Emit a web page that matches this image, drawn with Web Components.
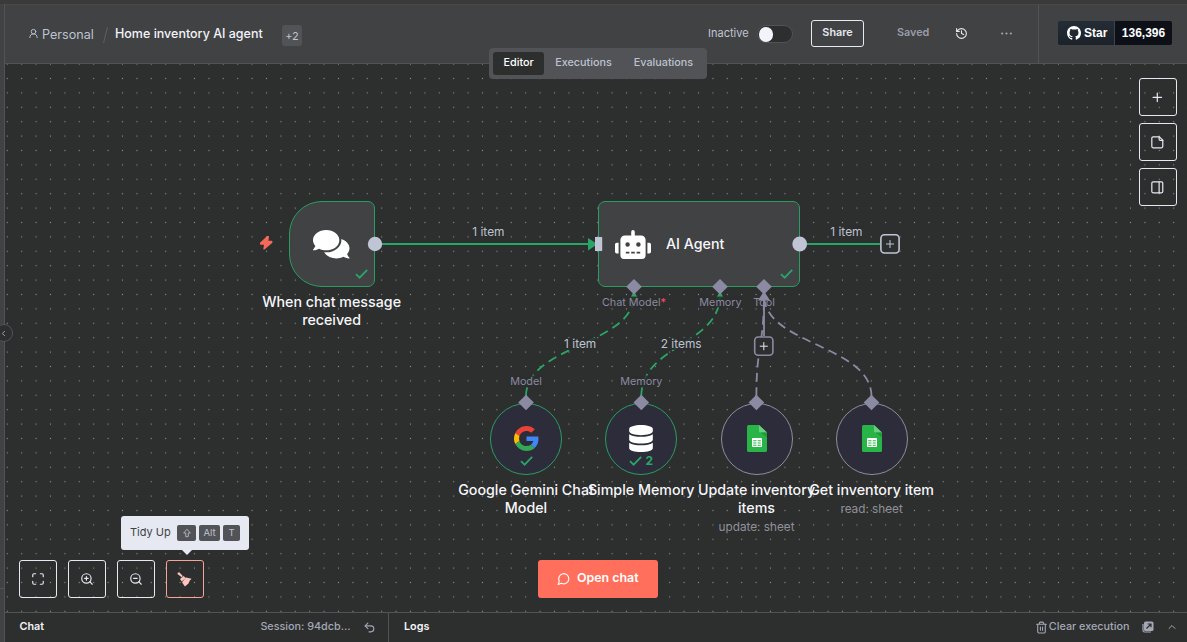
<!DOCTYPE html>
<html lang="en">
<head>
<meta charset="utf-8">
<title>Home inventory AI agent</title>
<style>
html,body{margin:0;height:100%;overflow:hidden;background:#2d2e2e}
body{font-family:Inter,"Liberation Sans",sans-serif;color:#c0c5d2;font-size:12px}
</style>
</head>
<body>
<wf-app></wf-app>
<script>
const define = (name, css, html) => customElements.define(name, class extends HTMLElement {
  constructor() {
    super();
    const attr = k => this.getAttribute(k) || '';
    const body = typeof html === 'function' ? html(attr, this) : html;
    this.attachShadow({ mode: 'open' }).innerHTML = `<style>*{box-sizing:border-box}${css}</style>${body}`;
  }
});

const line = d => `<svg viewBox="0 0 24 24" fill="none" stroke="currentColor" stroke-width="2" stroke-linecap="round" stroke-linejoin="round">${d}</svg>`;
const ICONS = {
  user: line('<circle cx="12" cy="8" r="5"/><path d="M20 21a8 8 0 0 0-16 0"/>'),
  history: line('<path d="M3 12a9 9 0 1 0 9-9 9.75 9.75 0 0 0-6.74 2.74L3 8"/><path d="M3 3v5h5"/><path d="M12 7v5l4 2"/>'),
  dots: line('<circle cx="12" cy="12" r="1"/><circle cx="20" cy="12" r="1"/><circle cx="4" cy="12" r="1"/>'),
  plus: line('<path d="M5 12h14M12 5v14"/>'),
  note: line('<path d="M15.5 3H5a2 2 0 0 0-2 2v14a2 2 0 0 0 2 2h14a2 2 0 0 0 2-2V8.500Z"/><path d="M15 3v4a2 2 0 0 0 2 2h4"/>'),
  panel: line('<rect x="3" y="3" width="18" height="18" rx="2"/><path d="M15 3v18"/>'),
  fit: line('<path d="M8 3H5a2 2 0 0 0-2 2v3M21 8V5a2 2 0 0 0-2-2h-3M3 16v3a2 2 0 0 0 2 2h3M16 21h3a2 2 0 0 0 2-2v-3"/>'),
  zoomin: line('<circle cx="11" cy="11" r="8"/><path d="m21 21-4.35-4.35M11 8v6M8 11h6"/>'),
  zoomout: line('<circle cx="11" cy="11" r="8"/><path d="m21 21-4.35-4.350M8 11h6"/>'),
  broom: '<svg viewBox="0 0 16 16" fill="currentColor"><path d="M.9.900 2.500.4 6.400 4.300 5.200 5.700.5 2.200ZM7.300 4.300 9.600 6.500 5.200 10.300 3.300 7.700ZM10 6 16 7.500 13.900 9.700 12.600 12.700 8.700 16 7.500 14.200 5.500 11.300Z"/></svg>',
  bubble: line('<path d="M7.900 20A9 9 0 1 0 4 16.100L2 22Z"/>'),
  trash: line('<path d="M3 6h18M19 6v14a2 2 0 0 1-2 2H7a2 2 0 0 1-2-2V6M8 6V4a2 2 0 0 1 2-2h4a2 2 0 0 1 2 2v2M10 11v6M14 11v6"/>'),
  up: line('<path d="m18 15-6-6-6 6"/>'),
  left: line('<path d="m15 18-6-6 6-6"/>'),
  undo: line('<path d="M9 14 4 9l5-5"/><path d="M4 9h10.500a5.500 5.500 0 0 1 0 11H11"/>'),
  popout: '<svg viewBox="0 0 12 12"><path d="M1 3v6.500A1.500 1.500 0 0 0 2.500 11H9" fill="none" stroke="currentColor" stroke-width="1.200"/><rect x="2" y=".5" width="9.500" height="9.500" rx="1.500" fill="currentColor"/><path d="M4.500 7.500 9 3M5.700 3H9v3.300" fill="none" stroke="#2d2e2e" stroke-width="1.200"/></svg>',
  shift: line('<path d="M9 20v-8H4l8-9 8 9h-5v8z"/>'),
  bolt: '<svg viewBox="0 0 37 41" fill="currentColor" stroke="currentColor" stroke-width="4" stroke-linejoin="round"><path d="M22 2 2 21V24H14L12 39 35 19V16H23L25 2Z"/></svg>',
  check: '<svg viewBox="0 0 13 10" fill="none" stroke="currentColor" stroke-width="1.800"><path d="M1 5.200 4.600 8.700 12.200.9"/></svg>',
  github: '<svg viewBox="0 0 16 16" fill="currentColor"><path d="M8 0C3.580 0 0 3.580 0 8c0 3.540 2.290 6.530 5.470 7.590.4.070.55-.17.55-.38 0-.19-.01-.82-.01-1.490-2.010.37-2.530-.49-2.690-.94-.09-.23-.48-.94-.82-1.130-.28-.15-.68-.52-.01-.53.63-.01 1.080.58 1.230.82.72 1.210 1.870.87 2.330.66.07-.52.28-.87.51-1.070-1.780-.2-3.640-.89-3.640-3.950 0-.87.31-1.590.82-2.150-.08-.2-.36-1.020.08-2.120 0 0 .67-.21 2.200.82.64-.18 1.320-.27 2-.27s1.360.09 2 .27c1.530-1.040 2.200-.82 2.200-.82.44 1.100.16 1.920.08 2.120.51.56.82 1.270.82 2.150 0 3.070-1.870 3.750-3.650 3.950.29.25.54.73.54 1.480 0 1.070-.01 1.930-.01 2.200 0 .21.15.46.55.38A8.010 8.010 0 0 0 16 8c0-4.420-3.580-8-8-8z"/></svg>',
  comments: '<svg viewBox="0 0 576 512" fill="currentColor"><path d="M416 192c0-88.400-93.100-160-208-160S0 103.600 0 192c0 34.300 14.100 65.900 38 92-13.400 30.200-35.500 54.200-35.800 54.500-2.200 2.300-2.800 5.700-1.500 8.700S4.800 352 8 352c36.600 0 66.900-12.300 88.700-25 32.200 15.700 70.300 25 111.300 25 114.900 0 208-71.600 208-160zm122 220c23.900-26 38-57.700 38-92 0-66.900-53.500-124.200-129.300-148.100.9 6.600 1.300 13.300 1.300 20.100 0 105.900-107.700 192-240 192-10.800 0-21.300-.8-31.700-1.900C207.800 439.600 281.800 480 368 480c41 0 79.100-9.200 111.300-25 21.800 12.700 52.100 25 88.700 25 3.200 0 6.100-1.900 7.300-4.800 1.300-2.900.7-6.300-1.500-8.700-.3-.3-22.400-24.200-35.800-54.500z"/></svg>',
  robot: '<svg viewBox="0 0 640 512" fill="currentColor"><path d="M32,224H64V416H32A32,32,0,0,1,0,384V256A32,32,0,0,1,32,224Zm512-48V448a64,64,0,0,1-64,64H160a64,64,0,0,1-64-64V176a80,80,0,0,1,80-80H288V32a32,32,0,0,1,64,0V96H464A80,80,0,0,1,544,176ZM264,256a40,40,0,1,0-40,40A40,40,0,0,0,264,256Zm-8,128H192v32h64Zm96,0H288v32h64ZM456,256a40,40,0,1,0-40,40A40,40,0,0,0,456,256Zm-8,128H384v32h64ZM640,256V384a32,32,0,0,1-32,32H576V224h32A32,32,0,0,1,640,256Z"/></svg>',
  database: '<svg viewBox="0 0 448 512" fill="currentColor"><path d="M448 73.143v45.714C448 159.143 347.667 192 224 192S0 159.143 0 118.857V73.143C0 32.857 100.333 0 224 0s224 32.857 224 73.143zM448 176v102.857C448 319.143 347.667 352 224 352S0 319.143 0 278.857V176c48.125 33.143 136.208 48.572 224 48.572S399.874 209.143 448 176zm0 160v102.857C448 479.143 347.667 512 224 512S0 479.143 0 438.857V336c48.125 33.143 136.208 48.572 224 48.572S399.874 369.143 448 336z"/></svg>',
  google: '<svg viewBox="0 0 48 48"><path fill="#ea4335" d="M24 9.500c3.540 0 6.710 1.220 9.210 3.600l6.850-6.850C35.900 2.380 30.470 0 24 0 14.620 0 6.510 5.380 2.560 13.220l7.980 6.190C12.430 13.720 17.740 9.500 24 9.500z"/><path fill="#4285f4" d="M46.980 24.550c0-1.570-.15-3.090-.38-4.550H24v9.020h12.940c-.58 2.960-2.260 5.480-4.780 7.180l7.730 6c4.510-4.180 7.090-10.360 7.090-17.650z"/><path fill="#fbbc05" d="M10.530 28.590c-.48-1.450-.76-2.990-.76-4.590s.27-3.140.76-4.590l-7.980-6.190C.92 16.460 0 20.120 0 24c0 3.880.92 7.540 2.560 10.780l7.970-6.190z"/><path fill="#34a853" d="M24 48c6.480 0 11.930-2.130 15.890-5.810l-7.730-6c-2.150 1.450-4.920 2.300-8.160 2.300-6.260 0-11.570-4.220-13.470-9.910l-7.980 6.190C6.510 42.620 14.620 48 24 48z"/></svg>',
  sheets: '<svg viewBox="0 0 20 27"><path d="M1.500 0H12l8 7.500V25.500A1.500 1.500 0 0 1 18.500 27h-17A1.500 1.500 0 0 1 0 25.500v-24A1.500 1.500 0 0 1 1.500 0Z" fill="#28b446"/><path d="M12 0 20 7.500H13.500A1.500 1.500 0 0 1 12 6Z" fill="#6ace7c"/><path d="m13.500 7.500 6.500 5V7.500Z" fill="#219b38"/><rect x="5" y="13" width="10" height="9" rx="1" fill="#fff"/><path d="M6.200 15.700h3.300M10.700 15.700h3.100M6.200 18h3.300M10.700 18h3.100M6.200 20.300h3.300M10.700 20.300h3.100" stroke="#28b446" stroke-width="1.100"/></svg>'
};
define('wf-icon', ':host{display:block;flex:none}svg{display:block;width:100%;height:100%;overflow:visible}', a => ICONS[a('name')]);

/* ---------- header ---------- */
define('wf-breadcrumb', `
:host{display:flex;align-items:center;height:100%}
wf-icon{width:11px;height:11px;margin:-1px 3px 0 -1px}
.home{font-size:12.600px;color:#bcc2d0;width:62px;white-space:nowrap}
.sep{width:1px;height:16px;background:#5d5e61;transform:rotate(14deg);margin:2px 0 0 1px}
.name{font-size:12.500px;font-weight:500;color:#f2f3f8;margin:-1px 0 0 9px;white-space:nowrap;width:167px}
.more{background:#525356;border-radius:3px;width:20px;height:21px;line-height:22px;text-align:center;font-size:11px;margin-top:3px}
`, `<wf-icon name="user"></wf-icon><span class="home">Personal</span><span class="sep"></span><span class="name">Home inventory AI agent</span><span class="more">+2</span>`);

define('wf-toggle', `
:host{display:flex;align-items:center;gap:8px;font-size:11px;margin-top:-2px}
.track{width:36px;height:18px;border-radius:9px;background:#2d2e2e;border:1px solid #525356;padding:1px;margin-top:2px}
.knob{width:14.500px;height:14.500px;border-radius:50%;background:#f2f4fb}
`, `<slot></slot><span class="track"><div class="knob"></div></span>`);

define('wf-github-star', `
:host{display:flex;height:24px;font:bold 12px "Liberation Sans",sans-serif;color:#fff;border-radius:2px;overflow:hidden;margin-top:-2px}
.l{display:flex;align-items:center;gap:3px;background:linear-gradient(#242c35,#1c2229);width:56px;padding-left:9px}
.r{background:#0d1117;flex:1;text-align:center;line-height:24px;border-left:1px solid #3d444d;width:58px}
wf-icon{width:14px;height:14px}
`, `<span class="l"><wf-icon name="github"></wf-icon>Star</span><span class="r">136,396</span>`);

define('wf-header', `
:host{display:flex;height:60px;background:#414244;border-bottom:1px solid #525356;border-top:1px solid #464749;padding-left:24px}
.right{margin-left:auto;display:flex;align-items:center;height:100%}
.share{width:53px;height:27px;border:1px solid #e6e9f2;border-radius:3px;font-size:10.800px;font-weight:600;color:#e6e9f2;text-align:center;line-height:23px;margin:-1px 33px 0 18.400px}
.saved{font-size:10.800px;font-weight:600;color:#9a9ca8;width:58px;margin-top:-4px}
.hist{width:13px;height:13px;color:#e6e9f2;margin:-1px 32px 0 0}
.more{width:13px;height:13px;color:#a4a6b2;margin-top:-1px}
.star{display:flex;align-items:center;height:100%;border-left:1px solid #525356;margin-left:25px;padding:0 15px 0 19px}
.star>*{width:114px}
`, `<wf-breadcrumb></wf-breadcrumb><div class="right"><wf-toggle>Inactive</wf-toggle><span class="share">Share</span><span class="saved">Saved</span><wf-icon class="hist" name="history"></wf-icon><wf-icon class="more" name="dots"></wf-icon><div class="star"><wf-github-star></wf-github-star></div></div>`);

define('wf-tabs', `
:host{display:flex;background:#525356;border-radius:4px;padding:4px;height:31px;width:218px;font-size:10.800px;font-weight:500;color:#bcc2d0}
span{line-height:21px;height:23px;padding:0 11px;border-radius:3px;white-space:nowrap}
.on{background:#2d2e2e;color:#fff;padding:0 10.500px;width:51.500px}
`, `<span class="on">Editor</span><span>Executions</span><span>Evaluations</span>`);

/* ---------- canvas ---------- */
define('wf-button', `
:host{display:flex;align-items:center;justify-content:center;width:38px;height:38px;border:1px solid #e6e9f2;border-radius:3px;color:#e6e9f2}
:host([active]){border-color:#f7a399;color:#fbc4be}
wf-icon{width:14px;height:14px}
:host([side]) wf-icon,:host([active]) wf-icon{width:14.600px;height:14.600px;margin-left:-1.400px}
`, a => `<wf-icon name="${a('icon')}"></wf-icon>`);

define('wf-tooltip', `
:host{display:flex;align-items:center;background:#e6e9f2;color:#414244;border-radius:3px;width:128px;height:34px;padding-left:9px;font-size:11px;gap:3px}
.t{width:44px;margin-top:-2px;white-space:nowrap}
kbd{background:#525356;color:#bcc2d0;font:9.600px/14px Inter,sans-serif;height:16px;padding-bottom:1px;border-radius:2px;display:flex;align-items:center;justify-content:center}
wf-icon{width:10px;height:10px}
i{position:absolute;left:60px;top:33px;border:6px solid transparent;border-top-color:#e6e9f2;border-bottom:0}
`, `<span class="t">Tidy Up</span><kbd style="width:19px"><wf-icon name="shift"></wf-icon></kbd><kbd style="width:21px">Alt</kbd><kbd style="width:17px">T</kbd><i></i>`);

define('wf-label', `
:host{position:absolute;transform:translate(-50%,-50%);white-space:nowrap;background:rgba(45,46,46,.85);line-height:12px;font-size:11.900px;color:#bcc2d0}
:host([port]){font-size:10.800px;color:#8b899f;line-height:11px}
b{color:#ff4d5e;font-weight:400}
`, a => `<slot></slot>${a('required') ? '<b>*</b>' : ''}`);

define('wf-node', `
:host{position:absolute;display:block;color:#fff}
.box{position:absolute;inset:0;background:#414244;border:1.200px solid #2a9d63;border-radius:7px}
:host([kind=trigger]) .box{border-radius:33px 7px 7px 33px}
:host([kind=sub]) .box{border-radius:50%;background:#2c2c3a}
:host([idle]) .box{border-color:#8f8e9b}
.ic{position:absolute;inset:0;display:flex;align-items:center;justify-content:center}
:host([kind=agent]) .ic{justify-content:flex-start;padding:1px 0 0 17px;gap:15px}
:host([kind=agent]) .title{margin-top:-1px}
:host([kind=trigger]) .ic{padding-top:1px}
:host([kind=sub]) .ic{padding-bottom:1px}
.title{font-size:14.260px;font-weight:500;line-height:18px;text-align:center;color:#f5f6fa}
.cap{position:absolute;top:calc(100% + 6px);left:50%;width:144px;transform:translateX(-50%);text-align:center}
.sub{font-size:11.750px;color:#8f9099;line-height:15px;margin-top:3px}
.ok{position:absolute;right:7px;bottom:8px;display:flex;align-items:center;gap:3px;color:#2aa568;font-weight:700;font-size:12px;line-height:10px}
.ok wf-icon{width:13px;height:10px}
:host([kind=sub]) .ok{left:0;right:0;justify-content:center;bottom:8.500px}
`, a => {
  const agent = a('kind') === 'agent';
  return `<div class="box"></div><div class="ic"><wf-icon name="${a('icon')}" style="width:${a('iw')}px;height:${a('ih')}px"></wf-icon>${agent ? '<span class="title"><slot></slot></span>' : ''}</div>
  ${agent ? '' : `<div class="cap"><div class="title"><slot></slot></div>${a('note') ? `<div class="sub">${a('note')}</div>` : ''}</div>`}
  ${a('ok') ? `<div class="ok"><wf-icon name="check"></wf-icon>${a('count')}</div>` : ''}`;
});

const diamond = (x, y) => `<path d="M${x} ${y - 7.8}l7.800 7.800-7.800 7.800-7.800-7.800Z" fill="#8b8aa3"/>`;
define('wf-canvas', `
:host{display:block;position:relative;overflow:hidden;background:#2d2e2e}
.grid{position:absolute;inset:0;width:100%;height:100%}
/* the viewport is panned so that node positions share the window's origin */
.view{position:absolute;left:-5px;top:-64px;width:1187px;height:642px}
.view svg{position:absolute;inset:0}
.bolt{position:absolute;left:260.300px;top:235.600px;width:12.400px;height:13.800px;color:#f4695a}
.tools{position:absolute;right:10px;top:14px;display:flex;flex-direction:column;gap:7px}
.zoom{position:absolute;left:14px;bottom:14px;display:flex;gap:11px}
wf-tooltip{position:absolute;left:116px;top:452px}
.chat{position:absolute;left:533px;bottom:14px;width:120px;height:38px;border-radius:3px;background:#ff6f5c;color:#fff;display:flex;align-items:center;justify-content:center;gap:6px;font-size:12.400px;font-weight:600}
.chat wf-icon{width:13.500px;height:13.500px;margin-top:0}
.chat span{margin-top:-3px}
`, `
<svg class="grid"><defs><pattern id="d" x="38.300" y="7.300" width="14.400" height="14.400" patternUnits="userSpaceOnUse"><circle cx="7.200" cy="7.200" r=".62" fill="#8a8b8b"/></pattern></defs><rect width="100%" height="100%" fill="url(#d)"/></svg>
<div class="view">
<svg width="1187" height="642" fill="none" stroke-width="1.800">
 <g stroke="#2aa568"><path d="M375 244H590M800 244H880"/>
 <g stroke-dasharray="9 5.400"><path d="M526 396.300C526 345 634 345 634 295"/><path d="M641.300 396.300C641.300 345 720 345 720 295"/></g></g>
 <g stroke="#8b8aa3"><g stroke-dasharray="9 5.400"><path d="M756.400 396.300C756.400 345 764 345 764 295"/><path d="M871.500 396.300C871.500 345 764 345 764 295"/></g><path d="M764 290V336"/></g>
 <g fill="#2aa568"><path d="M588 238v12.400l9.500-6.200ZM630.500 297.500h7L634 291ZM716.500 297.500h7L720 291Z"/></g>
 <path d="M758 300.500h12L764 291Z" fill="#8b8aa3"/>
</svg>
<wf-node kind="trigger" icon="comments" iw="36.500" ih="32.500" ok="1" style="left:288.500px;top:201px;width:86.200px;height:86px">When chat message received</wf-node>
<wf-icon class="bolt" name="bolt"></wf-icon>
<wf-node kind="agent" icon="robot" iw="36" ih="29" ok="1" style="left:598px;top:201px;width:202px;height:86px">AI Agent</wf-node>
<wf-node kind="sub" icon="google" iw="25" ih="25" ok="1" style="left:490px;top:402.500px;width:72px;height:72px">Google Gemini Chat Model</wf-node>
<wf-node kind="sub" icon="database" iw="24" ih="27" ok="1" count="2" style="left:605.200px;top:402.500px;width:72px;height:72px">Simple Memory</wf-node>
<wf-node kind="sub" idle icon="sheets" iw="20" ih="27" note="update: sheet" style="left:720.550px;top:402.500px;width:72px;height:72px">Update inventory items</wf-node>
<wf-node kind="sub" idle icon="sheets" iw="20" ih="27" note="read: sheet" style="left:835.600px;top:402.500px;width:72px;height:72px">Get inventory item</wf-node>
<svg width="1187" height="642" fill="none">
 <g fill="#c0c5d5"><circle cx="375" cy="244" r="7.200"/><circle cx="799.700" cy="244" r="7.400"/><rect x="595" y="237" width="7.200" height="14"/></g>
 ${diamond(634, 286.700)}${diamond(720, 286.700)}${diamond(764, 286.700)}${diamond(526, 402.500)}${diamond(641.300, 402.500)}${diamond(756.400, 402.500)}${diamond(871.500, 402.500)}
 <g fill="#2d2e2e" stroke-width="1.600"><rect x="880.900" y="234.800" width="18.200" height="18.200" rx="3.500" stroke="#c0c5d5"/><rect x="754.700" y="337" width="18.200" height="18.200" rx="3.500" stroke="#8b8aa3"/></g>
 <path d="M886 244h8M890 240v8" stroke="#c0c5d5"/><path d="M759.800 346.200h8M763.800 342.200v8" stroke="#e6e9f2"/>
</svg>
<wf-label style="left:488.400px;top:231.500px">1 item</wf-label>
<wf-label style="left:846.400px;top:231.500px">1 item</wf-label>
<wf-label style="left:580.200px;top:343.500px">1 item</wf-label>
<wf-label style="left:681.200px;top:343.500px">2 items</wf-label>
<wf-label port required="1" style="left:634px;top:302px">Chat Model</wf-label>
<wf-label port style="left:720.500px;top:302px">Memory</wf-label>
<wf-label port style="left:764px;top:302px;background:none">Tool</wf-label>
<wf-label port style="left:526px;top:381px">Model</wf-label>
<wf-label port style="left:641.300px;top:381px">Memory</wf-label>
</div>
<div class="tools"><wf-button side icon="plus"></wf-button><wf-button side icon="note"></wf-button><wf-button side icon="panel"></wf-button></div>
<div class="zoom"><wf-button icon="fit"></wf-button><wf-button icon="zoomin"></wf-button><wf-button icon="zoomout"></wf-button><wf-button icon="broom" active></wf-button></div>
<wf-tooltip></wf-tooltip>
<div class="chat"><wf-icon name="bubble"></wf-icon><span>Open chat</span></div>`);

/* ---------- footer ---------- */
define('wf-footer', `
:host{display:flex;height:30px;border-top:1px solid #525356;background:#2d2e2e;font-size:10.800px;line-height:14px}
.p{display:flex;align-items:flex-start;padding-top:7px}
.chat{width:384px;border-right:1px solid #525356;padding-left:14.500px}
.logs{flex:1;padding-left:15px}
b{font-weight:600;color:#f2f3f8;margin-right:auto}
.m{color:#a4a8b4;font-weight:500}
wf-icon{width:12px;height:12px;color:#a4a8b4;margin-top:1px}
`, `<div class="p chat"><b>Chat</b><span class="m">Session: 94dcb...</span><wf-icon name="undo" style="width:13px;height:13px;margin:1px 12px 0 12.500px"></wf-icon></div>
<div class="p logs"><b>Logs</b><wf-icon name="trash" style="width:13px;height:13px;margin-right:1px"></wf-icon><span class="m">Clear execution</span><wf-icon name="popout" style="margin:1px 12px 0 12.500px"></wf-icon><wf-icon name="up" style="margin:1px 9px 0 0"></wf-icon></div>`);

define('wf-app', `
:host{display:grid;grid-template:4px 1fr/5px 1fr;width:1187px;height:642px;overflow:hidden;position:relative}
.top{grid-column:1/3;background:#3a3a3a}
.rail{background:linear-gradient(#525356,#525356) 0 584px/100% 1px no-repeat #414244;border-right:1px solid #525356}
main{display:flex;flex-direction:column;min-width:0}
wf-canvas{flex:1}
wf-tabs{position:absolute;left:489px;top:48px}
.fold{position:absolute;left:-5px;top:324px;width:18px;height:18px;border:1px solid #525356;border-radius:50%;background:#2d2e2e;display:flex;align-items:center;padding-left:3px;color:#c0c5d2}
.fold wf-icon{width:9px;height:9px}
`, `<div class="top"></div><div class="rail"></div><main><wf-header></wf-header><wf-canvas></wf-canvas><wf-footer></wf-footer></main><wf-tabs></wf-tabs><div class="fold"><wf-icon name="left"></wf-icon></div>`);
</script>
</body>
</html>
